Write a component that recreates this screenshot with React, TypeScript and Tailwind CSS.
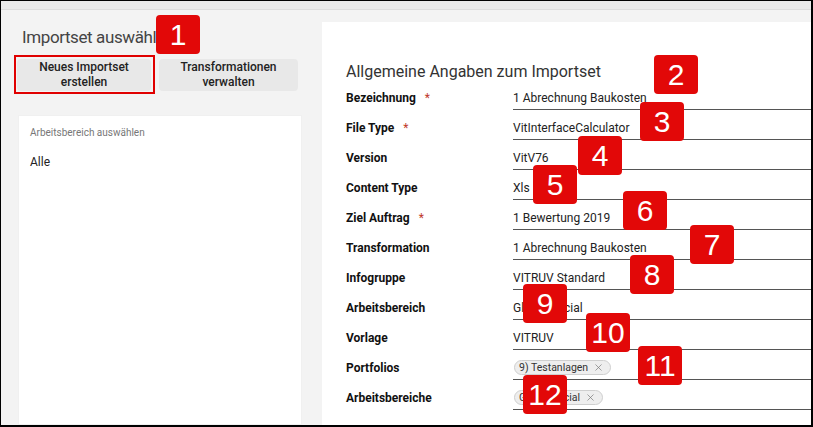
import { X } from "lucide-react";

const rows = [
  { label: "Bezeichnung", req: true, value: "1 Abrechnung Baukosten" },
  { label: "File Type", req: true, value: "VitInterfaceCalculator" },
  { label: "Version", value: "VitV76" },
  { label: "Content Type", value: "Xls" },
  { label: "Ziel Auftrag", req: true, value: "1 Bewertung 2019" },
  { label: "Transformation", value: "1 Abrechnung Baukosten" },
  { label: "Infogruppe", value: "VITRUV Standard" },
  { label: "Arbeitsbereich", value: "Global Social" },
  { label: "Vorlage", value: "VITRUV" },
  { label: "Portfolios", chip: "9) Testanlagen" },
  { label: "Arbeitsbereiche", chip: "Global Social" },
];

const badges = [
  { n: "1", x: 155, y: 14 },
  { n: "2", x: 653, y: 54 },
  { n: "3", x: 639, y: 101 },
  { n: "4", x: 577, y: 135 },
  { n: "5", x: 532, y: 164 },
  { n: "6", x: 622, y: 190 },
  { n: "7", x: 689, y: 224 },
  { n: "8", x: 629, y: 254 },
  { n: "9", x: 522, y: 283 },
  { n: "10", x: 585, y: 312 },
  { n: "11", x: 637, y: 345 },
  { n: "12", x: 522, y: 374 },
];

export default function App() {
  return (
    <div
      className="relative w-[813px] h-[427px] overflow-hidden bg-[#f3f3f3] border-black border-t border-l border-r-2 border-b-2 flex flex-col"
      style={{ fontFamily: "Roboto, 'Liberation Sans', sans-serif" }}
    >
      <div className="h-[9px] bg-[#e9e9e9] border-b border-[#dcdcdc] shrink-0" />

      <div className="flex flex-1 min-h-0">
        {/* left column */}
        <div className="w-[301px] pl-[16px] flex flex-col">
          <h2 className="mt-[16px] ml-[5px] text-[17px] leading-[22px] tracking-[-0.4px] text-[#444] whitespace-nowrap">
            Importset auswählen
          </h2>
          <div className="flex gap-[8px] mt-[11px]">
            <button className="w-[134px] h-[32px] bg-[#e8e8e8] rounded-[4px] text-[12px] leading-[15px] font-medium text-[#222]">
              Neues Importset
              <br />
              erstellen
            </button>
            <button className="w-[139px] h-[32px] bg-[#e8e8e8] rounded-[4px] text-[12px] leading-[15px] font-medium text-[#222]">
              Transformationen
              <br />
              verwalten
            </button>
          </div>
          <div className="mt-[24px] ml-[1px] flex-1 bg-white border border-[#f0f0f0] px-[11px] pt-[10px]">
            <div className="text-[10px] leading-[14px] text-[#777]">Arbeitsbereich auswählen</div>
            <div className="mt-[14px] text-[12px] leading-[16px] text-[#222]">Alle</div>
          </div>
        </div>

        {/* right panel */}
        <div className="ml-[20px] mt-[12px] flex-1 bg-white pl-[24px] pt-[42px]">
          <h1 className="text-[16px] leading-[16px] text-[#333] whitespace-nowrap">
            Allgemeine Angaben zum Importset
          </h1>
          <div className="flex flex-col">
            {rows.map((r) => (
              <div key={r.label} className="flex h-[30px]">
                <div className="w-[167px] flex items-center pt-[6px] text-[12px] font-bold text-[#111]">
                  {r.label}
                  {r.req && <span className="ml-[9px] text-[#c0392b] font-normal">*</span>}
                </div>
                <div className="flex-1 flex items-center pt-[6px] border-b border-[#555] text-[12px] text-[#222] whitespace-nowrap">
                  {r.value}
                  {r.chip && (
                    <span className="ml-px flex items-center h-[15px] pl-[4px] pr-[6px] rounded-full bg-[#eeeeee] border border-[#cfcfcf] text-[10.5px] text-[#333]">
                      {r.chip}
                      <X size={11} strokeWidth={1.5} className="ml-[5px] text-[#777]" />
                    </span>
                  )}
                </div>
              </div>
            ))}
          </div>
        </div>
      </div>

      {/* annotation highlight */}
      <div className="absolute left-[13px] top-[54px] w-[141px] h-[39px] border-2 border-[#e00000]" />

      {badges.map((b) => (
        <div
          key={b.n}
          className="absolute w-[44px] h-[39px] rounded-[4px] bg-[#e20808] text-white text-[30px] leading-none flex items-center justify-center"
          style={{ left: b.x, top: b.y, fontFamily: "'Liberation Sans', Arial, sans-serif" }}
        >
          {b.n}
        </div>
      ))}
    </div>
  );
}
